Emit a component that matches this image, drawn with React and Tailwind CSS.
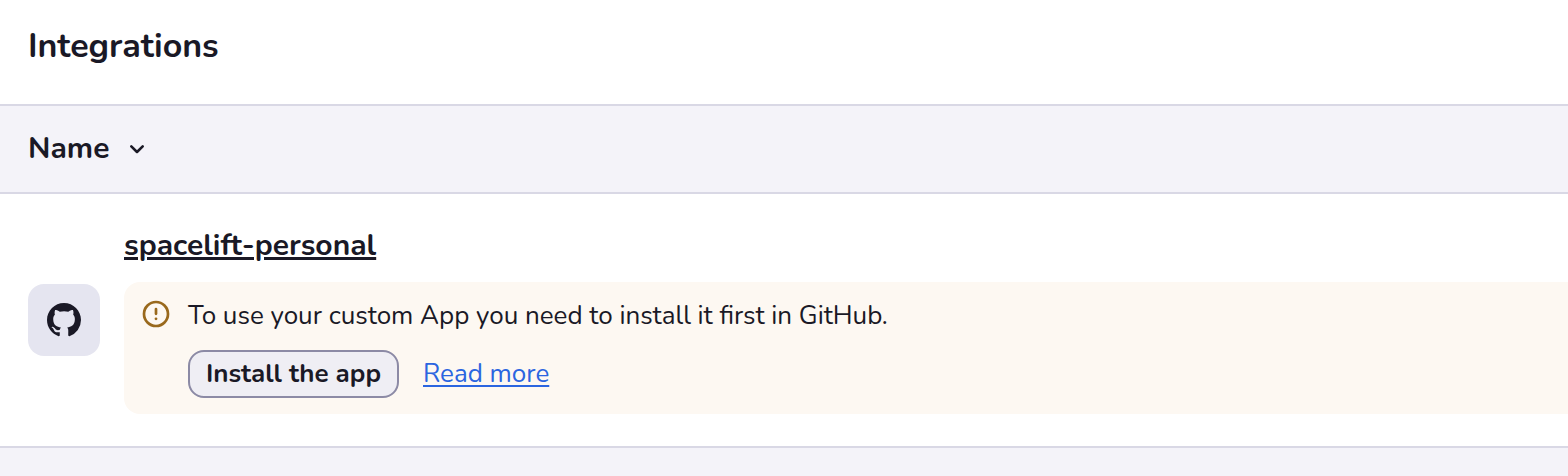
import { BsGithub } from "react-icons/bs";

export default function App() {
  return (
    <div className="flex h-[476px] w-full flex-col overflow-hidden bg-white font-['Nunito','Nunito_Sans','Noto_Sans',sans-serif] text-[#1a1926] antialiased">
      <header className="flex h-[104px] shrink-0 items-start px-7 pt-6">
        <h1 className="text-[34px] leading-[44px] font-bold tracking-[-0.06px] whitespace-nowrap">Integrations</h1>
      </header>
      <div className="flex h-[90px] shrink-0 items-center gap-5 border-y-2 border-[#d9d8e5] bg-[#f4f3f9] px-7">
        <span className="text-[30px] leading-10 font-bold">Name</span>
        <svg className="h-4 w-4" viewBox="0 0 16 16" fill="none" stroke="currentColor" strokeWidth="2.6" strokeLinecap="round" strokeLinejoin="round">
          <path d="M2.3 5.4 8 11 13.7 5.4" />
        </svg>
      </div>
      <main className="flex h-[252px] shrink-0 pl-7">
        <div className="mt-[90px] flex h-[72px] w-[72px] shrink-0 items-center justify-center rounded-2xl bg-[#e5e5f0]">
          <BsGithub className="h-[34px] w-[34px]" />
        </div>
        <div className="ml-6 flex flex-1 flex-col pt-8">
          <a className="self-start text-[30px] leading-10 font-bold underline decoration-[3px] underline-offset-[2px]">spacelift-personal</a>
          <section className="mt-4 flex h-[132px] rounded-l-2xl bg-[#fdf8f2] pt-[18px] pl-[18px]">
            <svg className="h-7 w-7 shrink-0 text-[#99691d]" viewBox="0 0 28 28" fill="none" stroke="currentColor" strokeWidth="2.7">
              <circle cx="14" cy="14" r="12" />
              <path d="M14 9v4.8" strokeLinecap="round" />
              <circle cx="14" cy="18.8" r="1.4" fill="currentColor" stroke="none" />
            </svg>
            <div className="ml-[18px]">
              <p className="text-[26px] leading-8 whitespace-nowrap">To use your custom App you need to install it first in GitHub.</p>
              <div className="mt-[18px] flex items-center gap-6">
                <button className="h-12 w-[211px] rounded-2xl border-2 border-[#8c8aa5] bg-[#efeef4] text-[26px] leading-8 font-bold whitespace-nowrap">Install the app</button>
                <a className="text-[26px] leading-8 text-[#2b65e0] underline decoration-2 underline-offset-[3px]">Read more</a>
              </div>
            </div>
          </section>
        </div>
      </main>
      <footer className="h-[30px] shrink-0 border-t-2 border-[#d9d8e5] bg-[#f4f3f9]" />
    </div>
  );
}
